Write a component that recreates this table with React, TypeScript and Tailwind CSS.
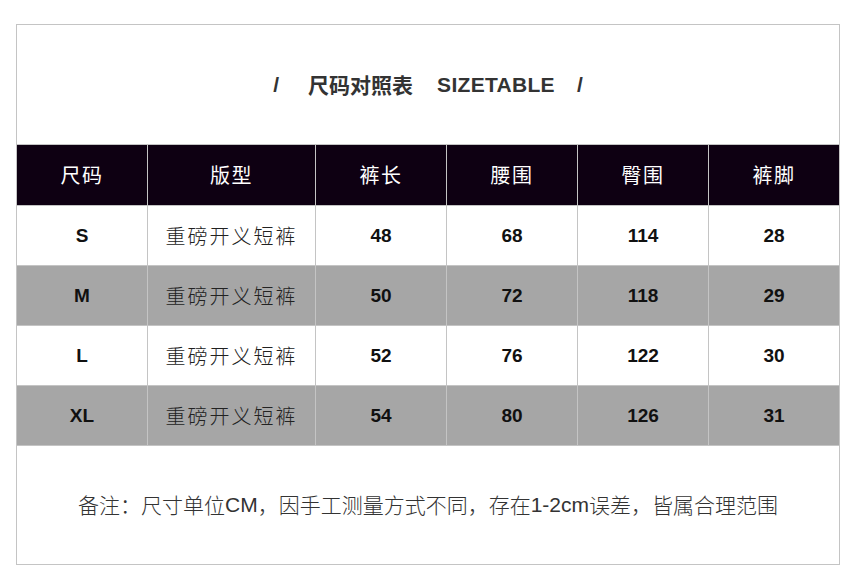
const cols = ["尺码", "版型", "裤长", "腰围", "臀围", "裤脚"];

const rows = [
  { size: "S", type: "重磅开义短裤", vals: ["48", "68", "114", "28"], gray: false },
  { size: "M", type: "重磅开义短裤", vals: ["50", "72", "118", "29"], gray: true },
  { size: "L", type: "重磅开义短裤", vals: ["52", "76", "122", "30"], gray: false },
  { size: "XL", type: "重磅开义短裤", vals: ["54", "80", "126", "31"], gray: true },
];

const grid = "grid grid-cols-[131px_168px_131px_131px_131px_1fr]";
const sans = "font-['Liberation_Sans','Noto_Sans_CJK_SC',sans-serif]";
const cjk = "font-['Noto_Sans_CJK_SC',sans-serif]";

export default function App() {
  return (
    <div className="w-[856px] h-[581px] bg-white pt-[24px] pl-[16px]">
      <div className="w-[824px] border border-[#c4c4c4]">
        <div className={`h-[119px] flex items-center justify-center text-[21px] font-bold text-[#333] ${sans}`}>
          <span className="mr-[29px]">/</span>
          <span className={`${cjk} mr-[24px]`}>尺码对照表</span>
          <span className="mr-[22px] tracking-[0.3px]">SIZETABLE</span>
          <span>/</span>
        </div>

        <div className={`${grid} h-[61px] border-t border-[#c4c4c4] bg-[#0e0012] text-white text-[20px] ${cjk}`}>
          {cols.map((c, i) => (
            <div
              key={c}
              className={`flex items-center justify-center tracking-[1.5px] ${i < 5 ? "border-r border-[#c4c4c4]" : ""}`}
            >
              {c}
            </div>
          ))}
        </div>

        {rows.map((r) => (
          <div
            key={r.size}
            className={`${grid} h-[60px] border-t border-[#c4c4c4] ${r.gray ? "bg-[#a6a6a6]" : "bg-white"}`}
          >
            <div className={`flex items-center justify-center border-r border-[#c4c4c4] pt-[2px] text-[19px] font-bold text-[#111] ${sans}`}>
              {r.size}
            </div>
            <div className={`flex items-center justify-center border-r border-[#c4c4c4] text-[20px] font-light text-[#222] tracking-[2px] ${cjk}`}>
              {r.type}
            </div>
            {r.vals.map((v, i) => (
              <div
                key={i}
                className={`flex items-center justify-center pt-[2px] text-[19px] font-bold text-[#111] ${sans} ${i < 3 ? "border-r border-[#c4c4c4]" : ""}`}
              >
                {v}
              </div>
            ))}
          </div>
        ))}

        <div className={`h-[119px] border-t border-[#c4c4c4] flex items-center justify-center text-[21px] text-[#333] ${sans}`}>
          <span className={`${cjk} font-light`}>备注：尺寸单位</span>
          <span>CM</span>
          <span className={`${cjk} font-light`}>，因手工测量方式不同，存在</span>
          <span>1-2cm</span>
          <span className={`${cjk} font-light`}>误差，皆属合理范围</span>
        </div>
      </div>
    </div>
  );
}
